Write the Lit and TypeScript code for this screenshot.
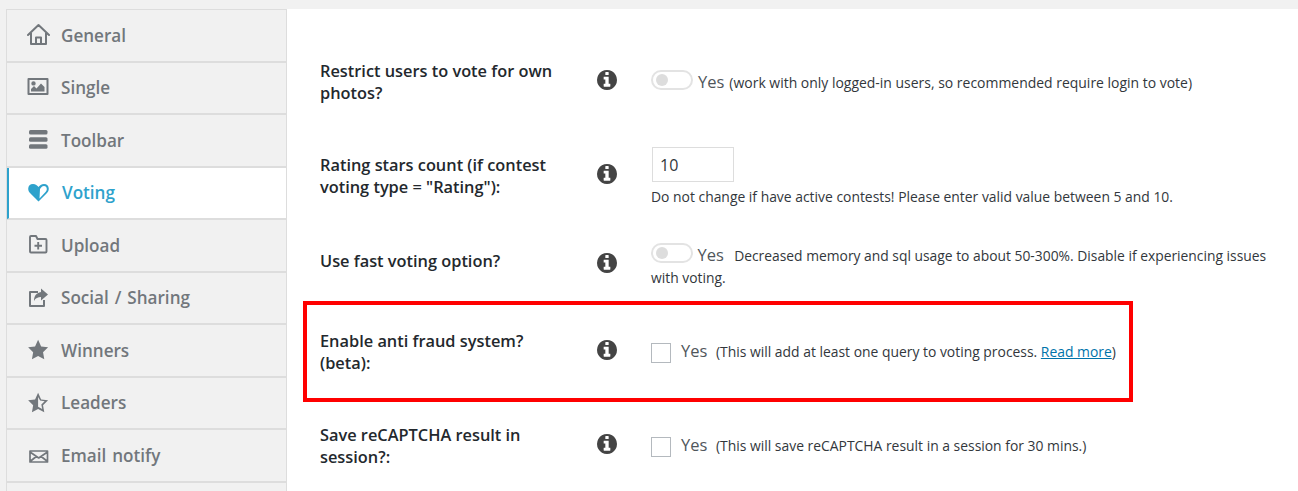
import { LitElement, html, css, svg } from "lit";
import { customElement } from "lit/decorators.js";

const ICONS: Record<string, unknown> = {
  home: svg`<path d="M1 12 L11.500 2 L22 12 M4 10 V21 H19 V10 M9 21 V14.500 H14 V21" fill="none" stroke="currentColor" stroke-width="2" stroke-linejoin="round" stroke-linecap="round"/>`,
  image: svg`<path fill-rule="evenodd" fill="currentColor" d="M1.500 2h19a1 1 0 0 1 1 1v15a1 1 0 0 1-1 1h-19a1 1 0 0 1-1-1V3a1 1 0 0 1 1-1zM2.500 4v13h17V4zM6.500 5.200a2.200 2.200 0 1 1 0 4.400a2.200 2.200 0 0 1 0-4.400zM4 15.500v-2.500l3-3l2.500 2.500l4.500-5l3.500 3.500v4.500z"/>`,
  bars: svg`<g fill="currentColor"><rect x="2" y="2" width="18.500" height="4.600" rx="1.500"/><rect x="2" y="9.200" width="18.500" height="4.600" rx="1.500"/><rect x="2" y="16.200" width="18.500" height="4.600" rx="1.500"/></g>`,
  heart: svg`<path fill-rule="evenodd" fill="currentColor" d="M11.500 20.500 L3 12 C-0.500 8 1.500 3 6 3 C8.500 3 10.500 4.500 11.500 6 C12.500 4.500 14.500 3 17 3 C21.500 3 23.500 8 20 12 Z M13 8 L12.500 17.500 L18.500 11 C21 8 19.500 5 17 5 C15 5 14 6.500 13 8 Z"/>`,
  upload: svg`<path fill="none" stroke="currentColor" stroke-width="1.900" stroke-linejoin="round" d="M3 4V18.500A1 1 0 0 0 4 19.500H18.500A1 1 0 0 0 19.500 18.500V7A1 1 0 0 0 18.500 6H10.500L9 3H4A1 1 0 0 0 3 4ZM11.200 9V16.500M7.500 12.700H15"/>`,
  share: svg`<path fill="currentColor" fill-rule="evenodd" d="M3 5h8v2H4v12h12v-5h2v6a1 1 0 0 1-1 1H3a1 1 0 0 1-1-1V6a1 1 0 0 1 1-1zM14 2.500l7 6l-7 6v-3.500c-3 0-5.500 1-7 4c0-5 2-8 7-9z"/>`,
  star: svg`<path transform="translate(-.3 .4) scale(.95)" fill="currentColor" d="M12 1.500l3.200 6.900l7.300 1l-5.300 5.200l1.300 7.400L12 18.400l-6.500 3.600l1.300-7.400L1.500 9.400l7.300-1z"/>`,
  starhalf: svg`<path transform="translate(-.3 .4) scale(.95)" fill="currentColor" fill-rule="evenodd" d="M12 1.500l3.200 6.900l7.300 1l-5.300 5.200l1.300 7.400L12 18.400l-6.500 3.600l1.300-7.400L1.500 9.400l7.300-1zM12 5.800V16.200l4.300 2.400l-.9-4.800l3.500-3.400l-4.800-.7z"/>`,
  mail: svg`<path fill="none" stroke="currentColor" stroke-width="1.700" stroke-linejoin="round" d="M3 8h17.500v11H3zM3 9l8.700 6l8.800-6M3 18.500l6.300-5M20.500 18.500l-6.300-5"/>`,
};

const INFO = "M1152 1376v-160q0-14-9-23t-23-9h-96v-512q0-14-9-23t-23-9h-320q-14 0-23 9t-9 23v160q0 14 9 23t23 9h96v320h-96q-14 0-23 9t-9 23v160q0 14 9 23t23 9h448q14 0 23-9t9-23zm-128-896v-160q0-14-9-23t-23-9h-192q-14 0-23 9t-9 23v160q0 14 9 23t23 9h192q14 0 23-9t9-23zm640 416q0 209-103 385.5t-279.5 279.5-385.5 103-385.5-103-279.5-279.5-103-385.5 103-385.5 279.5-279.5 385.5-103 385.5 103 279.5 279.5 103 385.5z";

const TABS = [
  ["General", "home"],
  ["Single", "image"],
  ["Toolbar", "bars"],
  ["Voting", "heart"],
  ["Upload", "upload"],
  ["Social / Sharing", "share"],
  ["Winners", "star"],
  ["Leaders", "starhalf"],
  ["Email notify", "mail"],
  ["", ""],
];

@customElement("app-root")
export class AppRoot extends LitElement {
  static styles = css`
    :host {
      display: block;
      position: relative;
      width: 1298px;
      height: 491px;
      overflow: hidden;
      background: #f1f1f1;
      font-family: "Open Sans", "Noto Sans", sans-serif;
    }
    .page { display: flex; padding: 9px 0 0 6px; height: 482px; }
    .side {
      flex: none;
      width: 281px;
      box-sizing: border-box;
      border-top: 1px solid #ddd;
      border-left: 1px solid #ddd;
      border-right: 1px solid #ddd;
      height: 482px;
      overflow: hidden;
    }
    .tab {
      display: flex;
      align-items: center;
      box-sizing: border-box;
      height: 52.5px;
      padding-left: 20px;
      border-bottom: 2px solid #ddd;
      color: #72777c;
      font-size: 17.1px;
      font-weight: 600;
      word-spacing: 1.5px;
    }
    .tab svg { flex: none; width: 24px; height: 24px; margin-right: 10px; }
    .tab.active {
      background: #fff;
      color: #2ea2cc;
      border-left: 3px solid #2ea2cc;
      margin-left: -1px;
      padding-left: 18px;
    }
    .tab.active svg { margin-right: 11px; }
    .main {
      flex: 1;
      background: #fff;
      padding: 51px 0 0 33px;
      color: #32373c;
      font-size: 13.9px;
    }
    .row { display: flex; align-items: flex-start; }
    .r1 { height: 87px; }
    .r2 { height: 97px; }
    .r3 { height: 86px; }
    .r4 { height: 94px; }
    .label {
      flex: none;
      width: 245px;
      margin-right: 32px;
      color: #23282d;
      font-size: 16.35px;
      font-weight: 600;
      line-height: 22px;
    }
    .label-r2 { margin-top: 7px; }
    .label-r3 { margin-top: 6px; }
    .info { flex: none; width: 20px; height: 20px; color: #444; margin: 10px 34px 0 0; }
    .info-r2 { margin-top: 17px; }
    .info-r3 { margin-top: 9px; }
    .info svg { display: block; width: 20px; height: 20px; }
    .field { width: 620px; line-height: 22px; }
    .line { display: flex; align-items: center; height: 20px; margin-top: 10px; white-space: nowrap; }
    .line .yes { margin-top: 3px; }
    .line .note { margin-top: 5px; }
    .low { margin-top: 13px; }
    .low .yes { margin-top: -4px; }
    .low .note { margin-top: -2px; }
    .toggle {
      flex: none;
      box-sizing: border-box;
      position: relative;
      width: 42px;
      height: 20px;
      border: 2px solid #e3e3e3;
      border-radius: 10px;
      margin-right: 5px;
      background: #fff;
    }
    .toggle::after {
      content: "";
      position: absolute;
      left: 3px;
      top: 2px;
      width: 12px;
      height: 12px;
      border-radius: 50%;
      background: #ddd;
    }
    .yes { font-size: 16.5px; color: #50565b; }
    .check {
      flex: none;
      box-sizing: border-box;
      width: 20px;
      height: 20px;
      border: 1px solid #b4b9be;
      background: #fff;
      margin-right: 10px;
    }
    .note { margin-left: 5px; }
    .wide { font-size: 13.96px; }
    .num {
      box-sizing: border-box;
      width: 82px;
      height: 35px;
      margin-left: 1px;
      border: 1px solid #ddd;
      padding-left: 7px;
      font-size: 16px;
      line-height: 35px;
      color: #32373c;
    }
    .help { margin-top: 4px; }
    .wrap { font-size: 13.85px; }
    .wrap .toggle {
      display: inline-block;
      margin: -6px 1px -2px 0;
    }
    .wrap .yes { margin-right: 3px; }
    a { color: #0073aa; text-decoration: underline; }
    .mark {
      position: absolute;
      left: 303px;
      top: 301px;
      width: 830px;
      height: 101px;
      box-sizing: border-box;
      border: 4px solid #f00;
      pointer-events: none;
    }
  `;

  private info(cls = "") {
    return html`<div class="info ${cls}"><svg viewBox="128 128 1536 1536"><path fill="currentColor" d=${INFO}></path></svg></div>`;
  }

  render() {
    return html`
      <div class="page">
        <nav class="side">
          ${TABS.map(
            ([name, icon]) => html`<div class="tab ${name === "Voting" ? "active" : ""}">
              ${icon ? html`<svg viewBox="0 0 24 24">${ICONS[icon]}</svg>` : ""}<span>${name}</span>
            </div>`
          )}
        </nav>
        <main class="main">
          <div class="row r1">
            <div class="label">Restrict users to vote for own photos?</div>
            ${this.info()}
            <div class="field">
              <div class="line"><span class="toggle"></span><span class="yes">Yes</span><span class="note wide">(work with only logged-in users, so recommended require login to vote)</span></div>
            </div>
          </div>
          <div class="row r2">
            <div class="label label-r2">Rating stars count (if contest voting type = "Rating"):</div>
            ${this.info("info-r2")}
            <div class="field">
              <div class="num">10</div>
              <div class="help">Do not change if have active contests! Please enter valid value between 5 and 10.</div>
            </div>
          </div>
          <div class="row r3">
            <div class="label label-r3">Use fast voting option?</div>
            ${this.info("info-r3")}
            <div class="field wrap">
              <span class="toggle"></span> <span class="yes">Yes</span>&nbsp; Decreased memory and sql usage to about 50-300%. Disable if experiencing issues with voting.
            </div>
          </div>
          <div class="row r4">
            <div class="label">Enable anti fraud system? (beta):</div>
            ${this.info()}
            <div class="field">
              <div class="line low"><span class="check"></span><span class="yes">Yes</span><span class="note">&nbsp;(This will add at least one query to voting process. <a href="#">Read more</a>)</span></div>
            </div>
          </div>
          <div class="row">
            <div class="label">Save reCAPTCHA result in session?:</div>
            ${this.info()}
            <div class="field">
              <div class="line low"><span class="check"></span><span class="yes">Yes</span><span class="note">&nbsp;(This will save reCAPTCHA result in a session for 30 mins.)</span></div>
            </div>
          </div>
        </main>
      </div>
      <div class="mark"></div>
    `;
  }
}
